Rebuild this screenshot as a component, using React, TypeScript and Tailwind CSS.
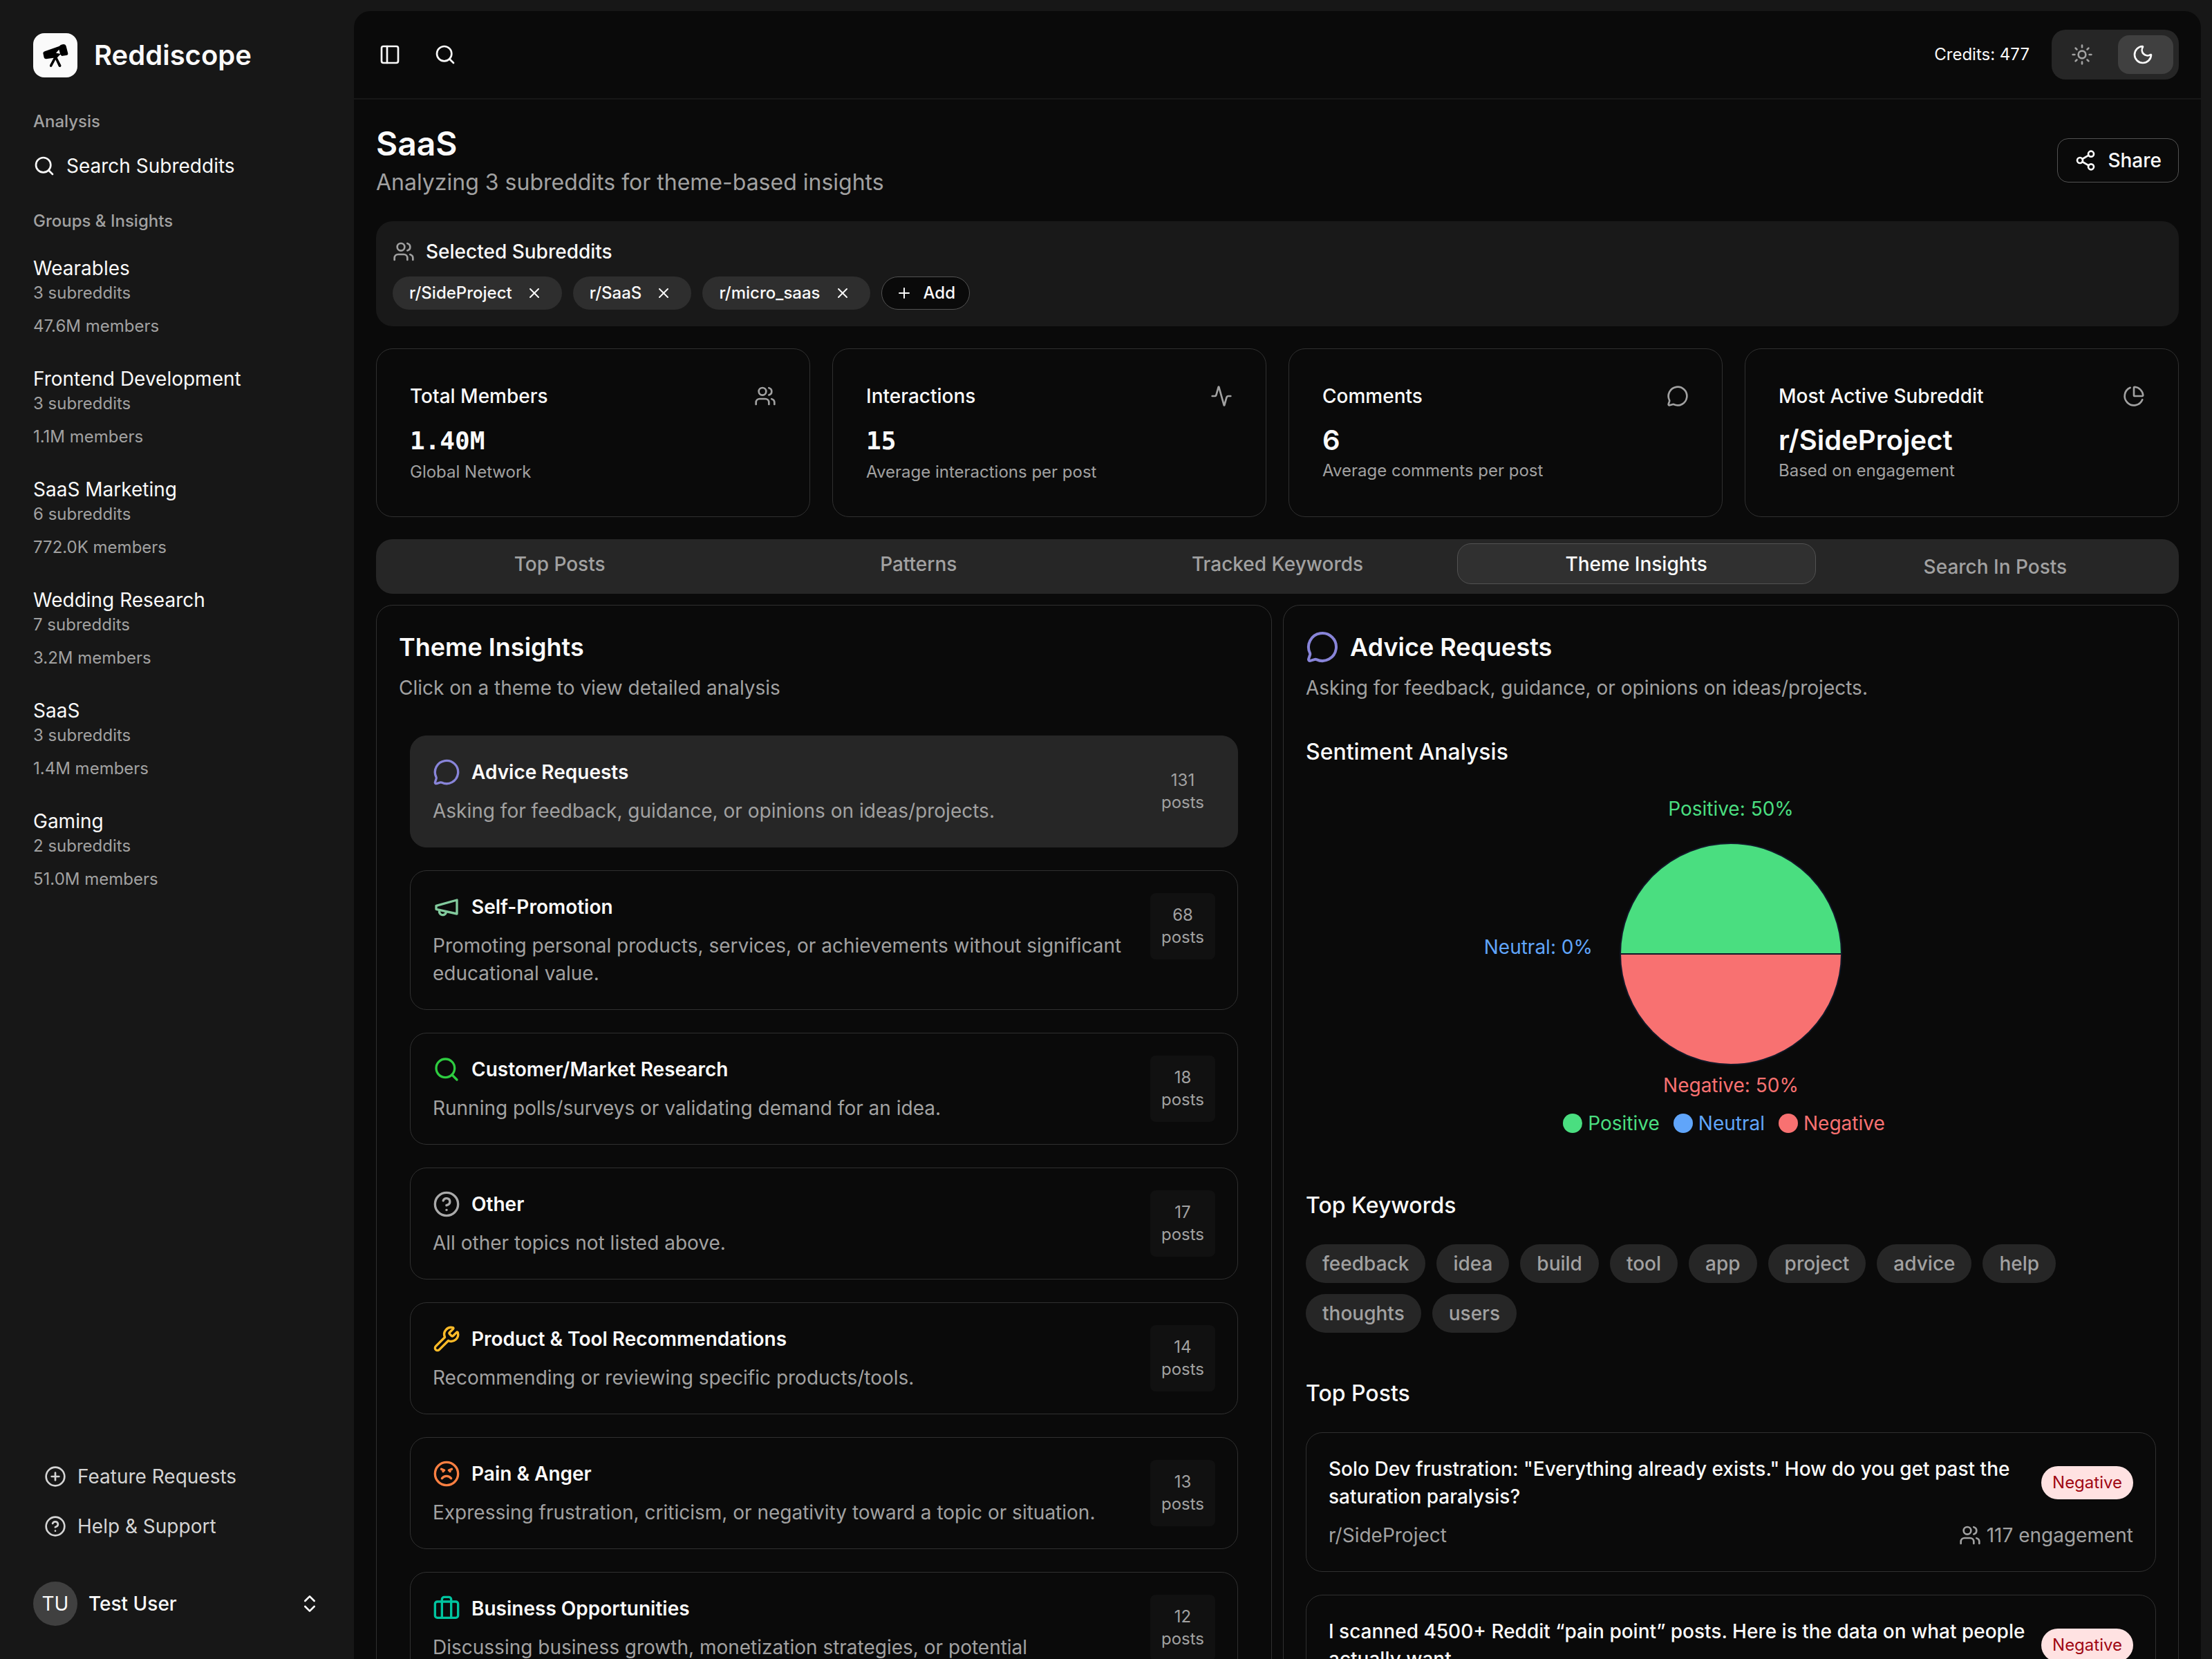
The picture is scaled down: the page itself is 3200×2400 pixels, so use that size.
import { useState } from "react";
import type { ReactNode } from "react";
import {
  Activity,
  Angry,
  ChartPie,
  ChevronsUpDown,
  CircleHelp,
  CirclePlus,
  MessageCircle,
  Moon,
  PanelLeft,
  Plus,
  Search,
  Share2,
  Sun,
  Users,
  Wrench,
  X,
} from "lucide-react";

const groups = [
  { name: "Wearables", subreddits: 3, members: "47.6M" },
  { name: "Frontend Development", subreddits: 3, members: "1.1M" },
  { name: "SaaS Marketing", subreddits: 6, members: "772.0K" },
  { name: "Wedding Research", subreddits: 7, members: "3.2M" },
  { name: "SaaS", subreddits: 3, members: "1.4M" },
  { name: "Gaming", subreddits: 2, members: "51.0M" },
];

const selected = ["r/SideProject", "r/SaaS", "r/micro_saas"];

const tabs = ["Top Posts", "Patterns", "Tracked Keywords", "Theme Insights", "Search In Posts"];

const themes = [
  {
    name: "Advice Requests",
    text: "Asking for feedback, guidance, or opinions on ideas/projects.",
    posts: 131,
    icon: <MessageCircle className="size-10 text-[#8884d8]" />,
  },
  {
    name: "Self-Promotion",
    text: "Promoting personal products, services, or achievements without significant educational value.",
    posts: 68,
    icon: <MegaphoneIcon />,
  },
  {
    name: "Customer/Market Research",
    text: "Running polls/surveys or validating demand for an idea.",
    posts: 18,
    icon: <Search className="size-10 text-[#2ecc40]" />,
  },
  {
    name: "Other",
    text: "All other topics not listed above.",
    posts: 17,
    icon: <CircleHelp className="size-10 text-[#aaaaaa]" />,
  },
  {
    name: "Product & Tool Recommendations",
    text: "Recommending or reviewing specific products/tools.",
    posts: 14,
    icon: <Wrench className="size-10 text-[#ffbb28]" />,
  },
  {
    name: "Pain & Anger",
    text: "Expressing frustration, criticism, or negativity toward a topic or situation.",
    posts: 13,
    icon: <Angry className="size-10 text-[#ff8042]" />,
  },
  {
    name: "Business Opportunities",
    text: "Discussing business growth, monetization strategies, or potential partnerships.",
    posts: 12,
    icon: <SuitcaseIcon />,
  },
];

const keywords = ["feedback", "idea", "build", "tool", "app", "project", "advice", "help", "thoughts", "users"];

const posts = [
  {
    title: 'Solo Dev frustration: "Everything already exists." How do you get past the saturation paralysis?',
    sub: "r/SideProject",
    engagement: 117,
  },
  {
    title: "I scanned 4500+ Reddit “pain point” posts. Here is the data on what people actually want.",
    sub: "r/SaaS",
    engagement: 98,
  },
];

function MegaphoneIcon() {
  return (
    <svg viewBox="0 0 24 24" fill="none" stroke="#82ca9d" strokeWidth="2" strokeLinecap="round" strokeLinejoin="round" className="size-10">
      <path d="m3 11 18-5v12L3 14v-3z" />
      <path d="M11.6 16.8a3 3 0 1 1-5.8-1.6" />
    </svg>
  );
}

function SuitcaseIcon() {
  return (
    <svg viewBox="0 0 24 24" fill="none" stroke="#00c49f" strokeWidth="2" strokeLinecap="round" strokeLinejoin="round" className="size-10">
      <path d="M16 20V4a2 2 0 0 0-2-2h-4a2 2 0 0 0-2 2v16" />
      <rect width="20" height="14" x="2" y="6" rx="2" />
    </svg>
  );
}

function Logo() {
  return (
    <svg viewBox="12 12 192 192" className="size-16 rounded-2xl bg-neutral-50">
      <path
        d="M62 91 L126 68 Q132 60 145 60 Q153 60 155 68 L163 100 Q164 107 156 108 L136 111 L130 104 L122 112 Q119 117 116 118 L133 151 Q135 158 128 159 Q124 159 122 155 L109 127 L94 155 Q92 159 88 159 Q82 157 84 151 L101 119 L68 124 Q61 124 59 118 L55 99 Q55 93 62 91 Z M111 98 L129 101 L124 83 Z"
        fill="#000"
        fillRule="evenodd"
      />
    </svg>
  );
}

function Sidebar() {
  return (
    <aside className="flex w-[512px] shrink-0 flex-col px-12 pt-12 pb-12">
      <a href="#" className="flex items-center gap-6 text-[40px] leading-[64px] font-semibold">
        <Logo />
        Reddiscope
      </a>

      <div className="mt-8 flex h-16 items-center text-[24px] font-medium text-neutral-400">Analysis</div>
      <a href="#" className="flex h-16 items-center gap-4 text-[28px]">
        <Search className="size-8" />
        Search Subreddits
      </a>

      <div className="mt-4 flex h-16 items-center text-[24px] font-medium text-neutral-400">Groups &amp; Insights</div>
      <nav className="flex flex-col gap-2">
        {groups.map((g) => (
          <a key={g.name} href="#" className="block py-4">
            <div className="text-[28px] leading-10">{g.name}</div>
            <div className="text-[24px] leading-8 text-neutral-400">{g.subreddits} subreddits</div>
            <div className="mt-4 text-[24px] leading-8 text-neutral-400">{g.members} members</div>
          </a>
        ))}
      </nav>

      {/* Footer */}
      <div className="mt-auto flex flex-col gap-2 px-4 text-[28px] text-neutral-300">
        <a href="#" className="flex h-16 items-center gap-4">
          <CirclePlus className="size-8" />
          Feature Requests
        </a>
        <a href="#" className="flex h-16 items-center gap-4">
          <CircleHelp className="size-8" />
          Help &amp; Support
        </a>
      </div>
      <button className="mt-12 flex items-center gap-4 text-[28px] font-medium">
        <span className="flex size-16 items-center justify-center rounded-full bg-neutral-700 font-normal">TU</span>
        Test User
        <ChevronsUpDown className="ml-auto size-8" />
      </button>
    </aside>
  );
}

function TopBar() {
  return (
    <header className="flex h-32 items-center border-b-2 border-[#171717] pr-8 pl-9">
      <button aria-label="Toggle sidebar">
        <PanelLeft className="size-8" />
      </button>
      <button aria-label="Search" className="ml-12">
        <Search className="size-8" />
      </button>
      <span className="ml-auto text-[24px]">Credits: 477</span>
      <div className="ml-8 flex gap-2 rounded-[20px] bg-neutral-800 p-2">
        <button aria-label="Light" className="flex h-14 w-20 items-center rounded-2xl pl-5 text-neutral-400">
          <Sun className="size-8" />
        </button>
        <button aria-label="Dark" className="flex h-14 w-20 items-center rounded-2xl bg-neutral-700 pl-5">
          <Moon className="size-8" />
        </button>
      </div>
    </header>
  );
}

type StatProps = { title: string; icon: ReactNode; value: string; note: string; mono?: boolean };

function StatCard({ title, icon, value, note, mono }: StatProps) {
  return (
    <div className="rounded-3xl border border-[#303030] p-12">
      <div className="flex items-center justify-between text-[28px] leading-10 font-medium">
        {title}
        <span className="text-neutral-400">{icon}</span>
      </div>
      {mono ? (
        <div className="mt-4 font-['DejaVu_Sans_Mono',monospace] text-[36px] leading-[58px] font-bold">{value}</div>
      ) : (
        <div className="mt-4 text-[40px] leading-[56px] font-semibold">{value}</div>
      )}
      <div className="text-[24px] leading-8 text-neutral-400">{note}</div>
    </div>
  );
}

function ThemeList() {
  const [active, setActive] = useState("Advice Requests");

  return (
    <section className="rounded-3xl border border-[#303030] p-8">
      <h2 className="text-[36px] leading-[56px] font-semibold">Theme Insights</h2>
      <p className="mt-[10px] text-[28px] leading-[42px] text-neutral-400">Click on a theme to view detailed analysis</p>

      <div className="mt-12 flex flex-col gap-[33px] px-4">
        {themes.map((t) => (
          <button
            key={t.name}
            onClick={() => setActive(t.name)}
            className={`flex items-start justify-between gap-8 rounded-3xl border p-8 text-left ${
              t.name === active ? "border-neutral-800 bg-neutral-800" : "border-[#303030]"
            }`}
          >
            <div>
              <div className="flex items-center gap-4 text-[28px] leading-10 font-semibold">
                {t.icon}
                {t.name}
              </div>
              <p className="mt-4 text-[28px] leading-10 text-neutral-400">{t.text}</p>
            </div>
            <div
              className={`w-[94px] shrink-0 rounded-lg py-4 text-center text-[24px] leading-8 text-neutral-400 ${
                t.name === active ? "" : "bg-[#111111]"
              }`}
            >
              {t.posts}
              <br />
              posts
            </div>
          </button>
        ))}
      </div>
    </section>
  );
}

function SentimentChart() {
  return (
    <div className="flex h-[512px] flex-col items-center">
      <svg width="720" height="460" viewBox="0 0 720 460" fontSize="28" textAnchor="middle">
        <path d="M200 236a160 160 0 0 1 320 0z" fill="#4ade80" stroke="#111827" strokeWidth="2" />
        <path d="M200 236a160 160 0 0 0 320 0z" fill="#f87171" stroke="#111827" strokeWidth="2" />
        <text x="360" y="36" fill="#4ade80">Positive: 50%</text>
        <text x="160" y="236" fill="#60a5fa" textAnchor="end">Neutral: 0%</text>
        <text x="360" y="436" fill="#f87171">Negative: 50%</text>
      </svg>
      <ul className="flex text-[28px] leading-[42px]">
        <li className="mr-5 flex items-center gap-2 text-[#4ade80]">
          <span className="size-7 rounded-full bg-[#4ade80]" />
          Positive
        </li>
        <li className="mr-5 flex items-center gap-2 text-[#60a5fa]">
          <span className="size-7 rounded-full bg-[#60a5fa]" />
          Neutral
        </li>
        <li className="mr-5 flex items-center gap-2 text-[#f87171]">
          <span className="size-7 rounded-full bg-[#f87171]" />
          Negative
        </li>
      </ul>
    </div>
  );
}

function ThemeDetail() {
  return (
    <section className="rounded-3xl border border-[#303030] p-8">
      <h2 className="flex items-center gap-4 text-[36px] leading-[56px] font-semibold">
        <MessageCircle className="size-12 text-[#8884d8]" />
        Advice Requests
      </h2>
      <p className="mt-[10px] text-[28px] leading-[42px] text-neutral-400">
        Asking for feedback, guidance, or opinions on ideas/projects.
      </p>

      <div className="mt-12 flex flex-col gap-16">
        <div>
          <h3 className="mb-8 text-[32px] leading-[48px] font-medium">Sentiment Analysis</h3>
          <SentimentChart />
        </div>

        <div>
          <h3 className="mb-8 text-[32px] leading-[48px] font-medium">Top Keywords</h3>
          <div className="flex flex-wrap gap-4">
            {keywords.map((k) => (
              <span key={k} className="rounded-full bg-neutral-800 px-6 py-2 text-[28px] leading-10 font-medium text-neutral-400">
                {k}
              </span>
            ))}
          </div>
        </div>

        <div>
          <h3 className="mb-8 text-[32px] leading-[48px] font-medium">Top Posts</h3>
          <div className="flex flex-col gap-[33px]">
            {posts.map((p) => (
              <article key={p.title} className="rounded-3xl border border-[#303030] p-8">
                <div className="flex items-center justify-between gap-4">
                  <h4 className="text-[28px] leading-10 font-medium">{p.title}</h4>
                  <span className="rounded-full bg-red-100 px-4 py-2 text-[24px] leading-8 text-red-800">Negative</span>
                </div>
                <div className="mt-4 flex items-center justify-between text-[28px] leading-10 text-neutral-400">
                  {p.sub}
                  <span className="flex items-center gap-2">
                    <Users className="size-8" />
                    {p.engagement} engagement
                  </span>
                </div>
              </article>
            ))}
          </div>
        </div>
      </div>
    </section>
  );
}

export default function App() {
  const [tab, setTab] = useState("Theme Insights");

  return (
    <div className="flex h-screen overflow-hidden bg-[#171717] font-['Inter',sans-serif] text-neutral-50">
      <Sidebar />

      <main className="mt-4 mr-4 min-w-0 flex-1 overflow-hidden rounded-t-3xl bg-neutral-950">
        <TopBar />

        <div className="p-8">
          {/* Title */}
          <div className="flex items-center justify-between">
            <div>
              <h1 className="text-[48px] leading-[64px] font-semibold">SaaS</h1>
              <p className="text-[32px] leading-[48px] text-neutral-400">
                Analyzing 3 subreddits for theme-based insights
              </p>
            </div>
            <button className="flex h-16 items-center gap-4 rounded-2xl border border-neutral-600 px-6 text-[28px] font-medium">
              <Share2 className="size-8" />
              Share
            </button>
          </div>

          {/* Selected subreddits */}
          <div className="mt-8 rounded-3xl bg-[#191919] p-6">
            <div className="flex items-center gap-4 text-[28px] leading-10 font-medium">
              <Users className="size-8 text-neutral-400" />
              Selected Subreddits
            </div>
            <div className="mt-4 flex gap-4 text-[24px] font-medium">
              {selected.map((s) => (
                <span key={s} className="flex h-12 items-center gap-4 rounded-full bg-[#2e2e2e] px-6">
                  {s}
                  <button aria-label={`Remove ${s}`} className="p-1">
                    <X className="size-6" />
                  </button>
                </span>
              ))}
              <button className="flex h-12 items-center gap-4 rounded-full border border-neutral-600 bg-neutral-950 px-5">
                <Plus className="size-6" />
                Add
              </button>
            </div>
          </div>

          {/* Stats */}
          <div className="mt-8 grid grid-cols-4 gap-8">
            <StatCard title="Total Members" icon={<Users className="size-8" />} value="1.40M" note="Global Network" mono />
            <StatCard title="Interactions" icon={<Activity className="size-8" />} value="15" note="Average interactions per post" mono />
            <StatCard title="Comments" icon={<MessageCircle className="size-8" />} value="6" note="Average comments per post" />
            <StatCard title="Most Active Subreddit" icon={<ChartPie className="size-8" />} value="r/SideProject" note="Based on engagement" />
          </div>

          {/* Tabs */}
          <div role="tablist" className="mt-8 grid h-[79px] grid-cols-5 items-start rounded-3xl bg-neutral-800 p-[6px]">
            {tabs.map((t) => (
              <button
                key={t}
                role="tab"
                aria-selected={t === tab}
                onClick={() => setTab(t)}
                className={`rounded-[20px] border text-[28px] font-medium ${t === "Search In Posts" ? "h-full" : "h-[59px]"} ${
                  t === tab ? "border-neutral-600 bg-[#303030]" : "border-transparent text-neutral-400"
                }`}
              >
                {t}
              </button>
            ))}
          </div>

          <div className="mt-4 grid grid-cols-2 gap-4">
            <ThemeList />
            <ThemeDetail />
          </div>
        </div>
      </main>
    </div>
  );
}
